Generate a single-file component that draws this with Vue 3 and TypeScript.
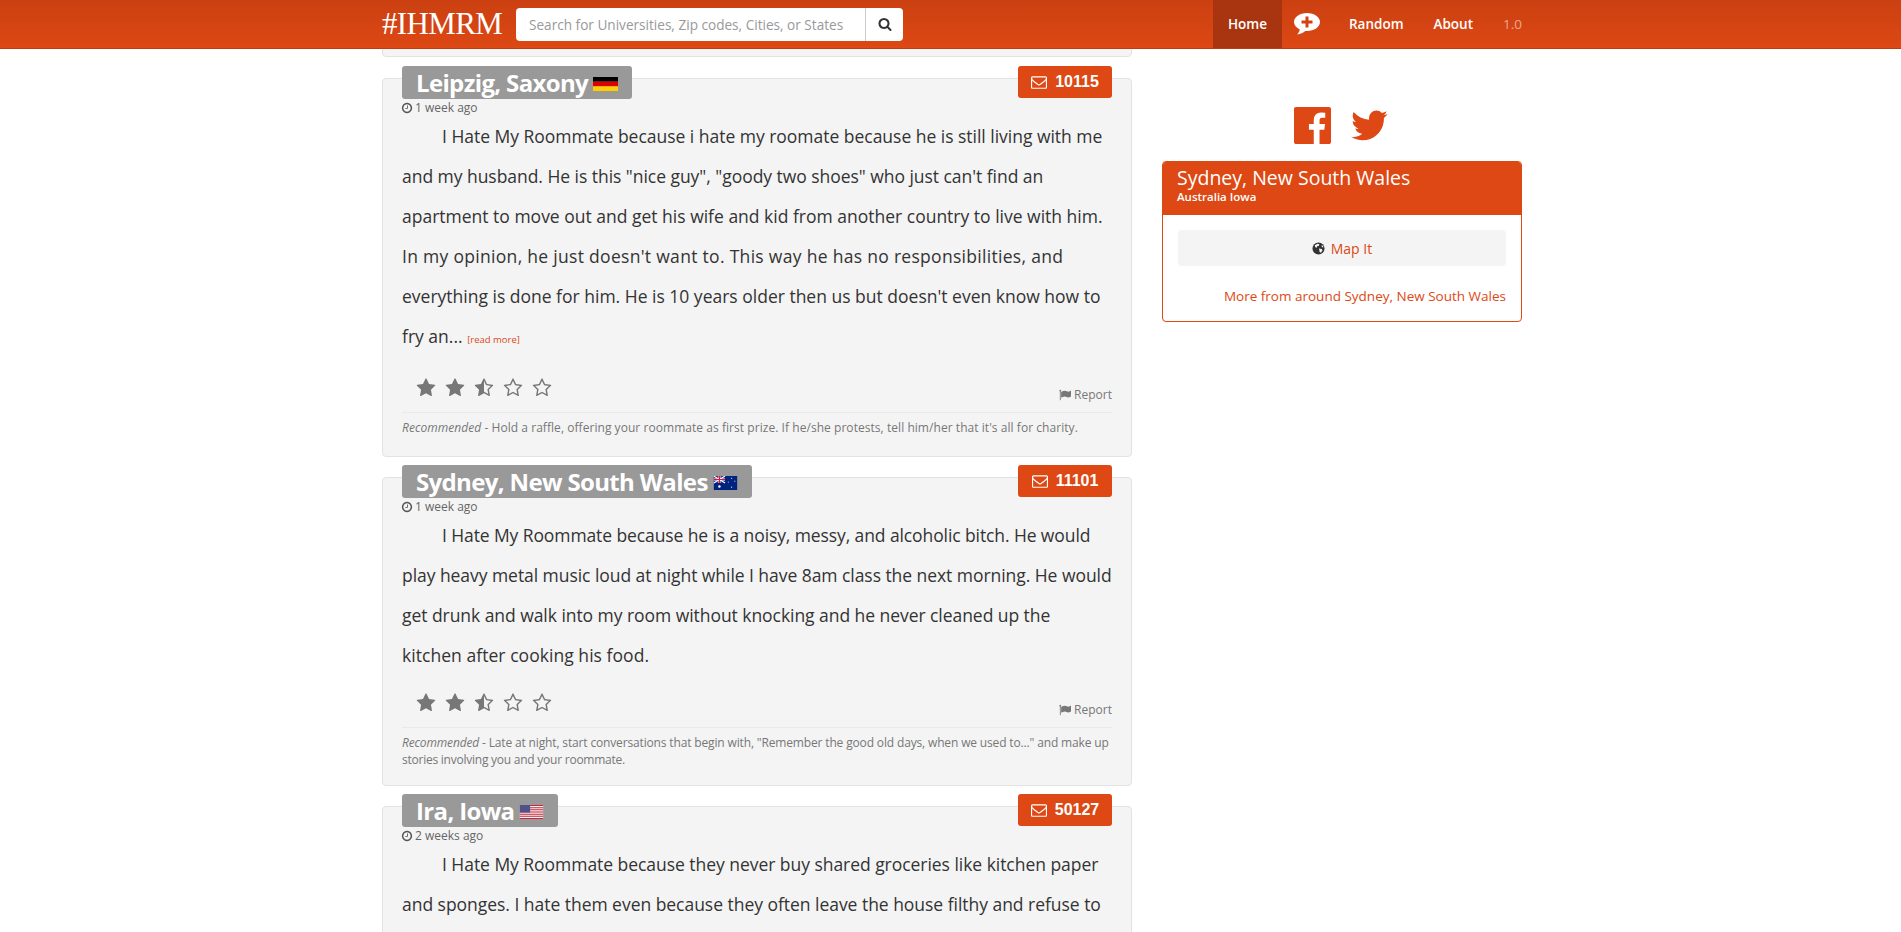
<script setup lang="ts">
interface Line {
  t: string
  ls?: number
}
interface Review {
  place: string
  flag: 'de' | 'au' | 'us'
  zip: string
  time: string
  lines: Line[]
  more?: boolean
  rec?: Line[]
}
const reviews: Review[] = [
  {
    place: 'Leipzig, Saxony',
    flag: 'de',
    zip: '10115',
    time: '1 week ago',
    more: true,
    lines: [
      { t: 'I Hate My Roommate because i hate my roomate because he is still living with me', ls: -0.02 },
      { t: 'and my husband. He is this "nice guy", "goody two shoes" who just can\'t find an', ls: -0.04 },
      { t: 'apartment to move out and get his wife and kid from another country to live with him.' },
      { t: 'In my opinion, he just doesn\'t want to. This way he has no responsibilities, and', ls: 0.3 },
      { t: 'everything is done for him. He is 10 years older then us but doesn\'t even know how to' },
      { t: 'fry an...' }
    ],
    rec: [{ t: 'Hold a raffle, offering your roommate as first prize. If he/she protests, tell him/her that it\'s all for charity.', ls: 0.05 }]
  },
  {
    place: 'Sydney, New South Wales',
    flag: 'au',
    zip: '11101',
    time: '1 week ago',
    lines: [
      { t: 'I Hate My Roommate because he is a noisy, messy, and alcoholic bitch. He would', ls: -0.1 },
      { t: 'play heavy metal music loud at night while I have 8am class the next morning. He would', ls: -0.05 },
      { t: 'get drunk and walk into my room without knocking and he never cleaned up the', ls: -0.05 },
      { t: 'kitchen after cooking his food.', ls: 0.05 }
    ],
    rec: [
      { t: 'Late at night, start conversations that begin with, "Remember the good old days, when we used to..." and make up', ls: -0.15 },
      { t: 'stories involving you and your roommate.', ls: -0.24 }
    ]
  },
  {
    place: 'Ira, Iowa',
    flag: 'us',
    zip: '50127',
    time: '2 weeks ago',
    lines: [
      { t: 'I Hate My Roommate because they never buy shared groceries like kitchen paper', ls: -0.04 },
      { t: 'and sponges. I hate them even because they often leave the house filthy and refuse to', ls: -0.03 }
    ]
  }
]
const track = (l: Line) => (l.ls ? { letterSpacing: `${l.ls}px` } : undefined)
const star = 'M1728 647q0 22-26 48l-363 354 86 500q1 7 1 20 0 21-10.500 35.500t-30.500 14.500q-19 0-40-12l-449-236-449 236q-22 12-40 12-21 0-31.500-14.500t-10.500-35.500q0-6 2-20l86-500-364-354q-25-27-25-48 0-37 56-46l502-73 225-455q19-41 49-41t49 41l225 455 502 73q56 9 56 46z'
const starHalf = 'M1250 957l257-250-356-52-66-10-30-60-159-322v963l59 31 318 168-60-355-12-66zm452-262l-363 354 86 500q5 33-6 51.500t-34 18.500q-17 0-40-12l-449-236-449 236q-23 12-40 12-23 0-34-18.500t-6-51.500l86-500-364-354q-32-32-23-59.500t54-34.500l502-73 225-455q20-41 49-41 28 0 49 41l225 455 502 73q45 7 54 34.500t-24 59.500z'
const starO = 'M1201 1004l306-297-422-62-189-382-189 382-422 62 306 297-73 421 378-199 377 199zm527-357q0 22-26 48l-363 354 86 500q1 7 1 20 0 50-41 50-19 0-40-12l-449-236-449 236q-22 12-40 12-21 0-31.500-14.500t-10.500-35.500q0-6 2-20l86-500-364-354q-25-27-25-48 0-37 56-46l502-73 225-455q19-41 49-41t49 41l225 455 502 73q56 9 56 46z'
const stars = [star, star, starHalf, starO, starO]
const envelope = 'M1664 1504v-768q-32 36-69 66-268 206-426 338-51 43-83 67t-86.500 48.500-102.500 24.500h-2q-48 0-102.500-24.500t-86.500-48.500-83-67q-158-132-426-338-37-30-69-66v768q0 13 9.500 22.500t22.500 9.500h1472q13 0 22.500-9.500t9.500-22.500zm0-1051v-24.500l-.5-13-3-12.500-5.500-9-9-7.500-14-2.500h-1472q-13 0-22.500 9.500t-9.500 22.500q0 168 147 284 193 152 401 317 6 5 35 29.500t46 37.500 44.500 31.500 50.500 27.500 43 9h2q20 0 43-9t50.500-27.500 44.500-31.500 46-37.500 35-29.500q208-165 401-317 54-43 100.500-115.500t46.500-131.500zm128-37v1088q0 66-47 113t-113 47h-1472q-66 0-113-47t-47-113v-1088q0-66 47-113t113-47h1472q66 0 113 47t47 113z'
const clock = 'M1024 544v448q0 14-9 23t-23 9h-320q-14 0-23-9t-9-23v-64q0-14 9-23t23-9h224v-352q0-14 9-23t23-9h64q14 0 23 9t9 23zm416 352q0-148-73-273t-198-198-273-73-273 73-198 198-73 273 73 273 198 198 273 73 273-73 198-198 73-273zm224 0q0 209-103 385.500t-279.500 279.500-385.500 103-385.500-103-279.500-279.500-103-385.500 103-385.500 279.500-279.500 385.500-103 385.500 103 279.500 279.500 103 385.500z'
const flagIcon = 'M320 256q0 72-64 110v1266q0 13-9.500 22.500t-22.500 9.500h-64q-13 0-22.500-9.500t-9.500-22.500v-1266q-64-38-64-110 0-53 37.500-90.500t90.500-37.500 90.500 37.500 37.500 90.500zm1472 64v763q0 25-12.500 38.500t-39.500 27.500q-215 116-369 116-61 0-123.500-22t-108.500-48-115.500-48-142.500-22q-192 0-464 146-17 9-33 9-26 0-45-19t-19-45v-742q0-32 31-55 21-14 79-43 236-120 421-120 107 0 200 29t219 88q38 19 88 19 54 0 117.500-21t110-47 88-47 54.500-21q26 0 45 19t19 45z'
const search = 'M1216 832q0-185-131.500-316.500t-316.500-131.500-316.500 131.500-131.500 316.500 131.500 316.500 316.500 131.500 316.500-131.500 131.500-316.500zm512 832q0 52-38 90t-90 38q-54 0-90-38l-343-342q-179 124-399 124-143 0-273.500-55.500t-225-150-150-225-55.500-273.500 55.500-273.500 150-225 225-150 273.500-55.500 273.500 55.500 225 150 150 225 55.500 273.500q0 220-124 399l343 343q37 37 37 90z'
const fb = 'M1579 128q35 0 60 25t25 60v1366q0 35-25 60t-60 25h-391v-595h199l30-232h-229v-148q0-56 23.500-84t91.500-28l122-1v-207q-63-9-178-9-136 0-217.500 80t-81.500 226v171h-200v232h200v595h-735q-35 0-60-25t-25-60v-1366q0-35 25-60t60-25h1366z'
const tw = 'M1684 408q-67 98-162 167 1 14 1 42 0 130-38 259.500t-115.500 248.500-184.500 210.500-258 146-323 54.500q-271 0-496-145 35 4 78 4 225 0 401-138-105-2-188-64.500t-114-159.500q33 5 61 5 43 0 85-11-112-23-185.500-111.500t-73.500-205.500v-4q68 38 146 41-66-44-105-115t-39-154q0-88 44-163 121 149 294.500 238.500t371.500 99.500q-8-38-8-74 0-134 94.500-228.500t228.500-94.500q140 0 236 102 109-21 205-78-37 115-142 178 92-10 184-50z'
</script>

<template>
  <div class="page">
    <header class="navbar">
      <div class="nav-inner">
        <a class="brand">#IHMRM</a>
        <form class="search" @submit.prevent>
          <input class="search-input" placeholder="Search for Universities, Zip codes, Cities, or States" />
          <button class="search-btn" type="button" aria-label="Search">
            <svg class="ic-search" viewBox="0 0 1792 1792"><path :d="search" /></svg>
          </button>
        </form>
        <nav class="nav-links">
          <a class="nav-link active">Home</a>
          <a class="nav-link nav-add" aria-label="Add">
            <svg class="ic-bubble" viewBox="0 0 28 24">
              <path d="M14 1C6.800 1 1 5 1 10c0 3.200 2.300 5.900 5.800 7.500-.4 2-1.500 3.700-2.600 5 3.200-.4 6.100-1.800 8.100-3.600.6.100 1.100.1 1.700.1 7.200 0 13-4 13-9S21.200 1 14 1z" fill="#fff" />
              <path d="M12.500 4.500h3v4h4v3h-4v4h-3v-4h-4v-3h4z" fill="#d34312" />
            </svg>
          </a>
          <a class="nav-link">Random</a>
          <a class="nav-link">About</a>
          <span class="nav-link version">1.0</span>
        </nav>
      </div>
    </header>

    <main class="container">
      <section class="feed">
        <div class="stub"></div>
        <article v-for="r in reviews" :key="r.zip" class="card">
          <div class="card-head">
            <h2 class="place">
              {{ r.place }}
              <svg v-if="r.flag === 'de'" class="flag" viewBox="0 0 25 15" preserveAspectRatio="none">
                <rect width="25" height="5" fill="#000" />
                <rect y="5" width="25" height="5" fill="#d00" />
                <rect y="10" width="25" height="5" fill="#ffce00" />
              </svg>
              <svg v-else-if="r.flag === 'au'" class="flag" viewBox="0 0 25 15">
                <rect width="25" height="15" fill="#00247d" />
                <rect width="12" height="7.500" fill="#2b2f8c" />
                <path d="M0 0l12 7.500M12 0L0 7.500" stroke="#fff" stroke-width="1.200" />
                <path d="M6 0v7.500M0 3.750h12" stroke="#fff" stroke-width="2.200" />
                <path d="M6 0v7.500M0 3.750h12" stroke="#e8112d" stroke-width="1.200" />
                <circle cx="6" cy="11.200" r="1.300" fill="#fff" />
                <circle cx="19" cy="2.500" r=".7" fill="#ccd" />
                <circle cx="19" cy="12" r=".7" fill="#ccd" />
                <circle cx="15.500" cy="6.500" r=".6" fill="#ccd" />
                <circle cx="22.500" cy="5.500" r=".6" fill="#ccd" />
              </svg>
              <svg v-else class="flag" viewBox="0 0 25 15">
                <rect width="25" height="15" fill="#f4f0f0" />
                <path d="M0 .6h25M0 2.900h25M0 5.200h25M0 7.500h25M0 9.800h25M0 12.100h25M0 14.400h25" stroke="#c6283c" stroke-width="1.100" />
                <rect width="11" height="8.100" fill="#50508a" />
              </svg>
            </h2>
            <span class="zip">
              <svg class="ic-env" viewBox="0 0 1792 1792"><path :d="envelope" /></svg>
              {{ r.zip }}
            </span>
          </div>
          <div class="time">
            <svg class="ic-clock" viewBox="0 0 1792 1792"><path :d="clock" /></svg>
            {{ r.time }}
          </div>
          <p class="body">
            <span v-for="(line, i) in r.lines" :key="i" class="line" :class="{ first: i === 0 }" :style="track(line)">
              {{ line.t }}
              <a v-if="r.more && i === r.lines.length - 1" class="more">[read more]</a>
            </span>
          </p>
          <template v-if="r.rec">
            <div class="meta">
              <div class="stars">
                <svg v-for="(s, i) in stars" :key="i" class="star" viewBox="0 0 1792 1792"><path :d="s" /></svg>
              </div>
              <a class="report">
                <svg class="ic-flag" viewBox="0 0 1792 1792"><path :d="flagIcon" /></svg>
                Report
              </a>
            </div>
            <div class="rec">
              <span v-for="(l, i) in r.rec" :key="i" class="line" :style="track(l)">
                <template v-if="i === 0"><em>Recommended</em> - </template>{{ l.t }}
              </span>
            </div>
          </template>
        </article>
      </section>

      <aside class="side">
        <div class="social">
          <svg class="ic-soc" viewBox="128 128 1536 1536"><path :d="fb" /></svg>
          <svg class="ic-soc tw" viewBox="100 200 1600 1400"><path :d="tw" /></svg>
        </div>
        <div class="panel">
          <div class="panel-head">
            <div class="panel-title">Sydney, New South Wales</div>
            <div class="panel-sub">Australia Iowa</div>
          </div>
          <div class="panel-body">
            <a class="map">
              <svg class="ic-globe" viewBox="0 0 14 14">
                <circle cx="7" cy="7" r="6.500" fill="#333" />
                <path d="M3 3.500l3-1.700 2 .7-.8 1.800-1.700.4-.3 1.600-1.600-.6zM7.500 7l3 .5.8 1.500-1.600 2.500-1.500-.7-.3-2zM10.500 3l1.500 1.500.2 1.500-1.700-.6z" fill="#f4f4f4" />
              </svg>
              Map It
            </a>
            <a class="around">More from around Sydney, New South Wales</a>
          </div>
        </div>
      </aside>
    </main>
  </div>
</template>

<style>
html, body { margin: 0; height: 100%; overflow: hidden; background: #fff; }
</style>

<style scoped>
.page {
  height: 932px;
  overflow: hidden;
  font-family: "Open Sans", "Noto Sans", sans-serif;
  color: #333;
}
.navbar {
  position: fixed;
  top: 0; left: 0; right: 0;
  z-index: 10;
  height: 48px;
  border-bottom: 1px solid #bf3e11;
  background: linear-gradient(#cb4011, #dd4814);
}
.nav-inner {
  width: 1140px;
  margin-left: 382px;
  height: 48px;
  display: flex;
  align-items: center;
}
.brand {
  font-family: "Liberation Serif", serif;
  font-size: 31px;
  color: #fff;
  letter-spacing: -.65px;
  width: 134px;
}
.search { display: flex; width: 387px; height: 33px; }
.search-input {
  flex: 1;
  min-width: 0;
  border: 0;
  border-radius: 4px 0 0 4px;
  padding: 0 13px;
  font: 13.600px "Open Sans", sans-serif;
  background: #fff;
  outline: 0;
}
.search-input::placeholder { color: #999; opacity: 1; }
.search-btn {
  width: 38px;
  border: 0;
  border-left: 1px solid #ccc;
  border-radius: 0 4px 4px 0;
  background: #fff;
  padding: 0;
  display: flex;
  align-items: center;
  justify-content: center;
}
.ic-search { width: 14px; height: 14px; fill: #333; }
.nav-links { margin-left: auto; display: flex; height: 48px; align-items: stretch; }
.nav-link {
  padding: 0 15px;
  display: flex;
  align-items: center;
  color: #fff;
  font-size: 13.500px;
  font-weight: 600;
}
.nav-link.active { background: #a93510; padding: 0 15px; width: 69px; box-sizing: border-box; }
.nav-add { padding: 0 13px 0 11px; }
.ic-bubble { width: 28px; height: 24px; }
.version { color: rgba(255,255,255,.55); padding: 0 0 0 15px; font-weight: 400; }
.container {
  width: 1140px;
  margin-left: 382px;
  display: flex;
  gap: 30px;
  align-items: flex-start;
}
.feed { width: 750px; flex: none; }
.stub {
  height: 57px;
  margin-bottom: 21px;
  background: #f4f4f4;
  border: 1px solid #e3e3e3;
  border-radius: 4px;
  box-sizing: border-box;
}
.card {
  margin-top: 20px;
  padding: 0 19px 17px 19px;
  background: #f4f4f4;
  border: 1px solid #e3e3e3;
  border-radius: 4px;
}
.stub + .card { margin-top: 0; }
.card-head {
  display: flex;
  justify-content: space-between;
  align-items: flex-start;
  margin-top: -13px;
}
.place {
  margin: 0;
  background: #999;
  color: #fff;
  border-radius: 3px;
  font-size: 24px;
  font-weight: 700;
  line-height: 33px;
  padding: 0 14px;
  display: flex;
  align-items: center;
  gap: 5px;
  letter-spacing: -.65px;
}
.flag { width: 25px; height: 14px; margin-top: 3px; }
.zip {
  background: #dd4814;
  color: #fff;
  border-radius: 3px;
  font: 700 16px "Liberation Sans", Arial, sans-serif;
  height: 32px;
  width: 94px;
  display: flex;
  align-items: center;
  justify-content: center;
  gap: 8px;
}
.ic-env { width: 16px; height: 16px; fill: #fff; }
.time {
  font-size: 12px;
  color: #666;
  line-height: 16px;
  margin-top: 1px;
  display: flex;
  align-items: center;
  gap: 2px;
}
.ic-clock { width: 12px; height: 12px; fill: #555; margin-left: -1px; }
.body {
  margin: 0;
  font-size: 17.500px;
  line-height: 40px;
  color: #333;
}
.line { display: block; white-space: nowrap; }
.line.first { text-indent: 40px; }
.more { font-size: 9.500px; color: #dd4814; letter-spacing: 0; }
.meta {
  display: flex;
  justify-content: space-between;
  align-items: flex-end;
  margin-top: 18px;
  padding: 0 0 8px 14px;
  border-bottom: 1px solid #eaeaea;
}
.stars { display: flex; gap: 9px; margin-bottom: 6px; }
.star { width: 20px; height: 20px; fill: #777; display: block; }
.report { font-size: 12px; color: #777; display: flex; align-items: center; gap: 3px; line-height: 16px; margin-bottom: 1px; }
.ic-flag { width: 12px; height: 12px; fill: #777; }
.rec { margin-top: 6px; min-height: 20px; font-size: 12px; line-height: 17px; color: #777; }
.rec em { font-style: italic; }
.side { width: 360px; flex: none; padding-top: 107px; }
.social { display: flex; justify-content: center; gap: 20px; align-items: center; margin-bottom: 17px; padding-right: 2px; }
.ic-soc { width: 37px; height: 37px; fill: #dd4814; }
.panel {
  border: 1px solid #dd4814;
  border-radius: 4px;
  overflow: hidden;
  background: #fff;
}
.panel-head { background: #dd4814; color: #fff; height: 53px; padding: 4px 14px 0; box-sizing: border-box; }
.panel-title { font-size: 19.500px; line-height: 24px; font-weight: 500; }
.panel-sub { font-size: 11.500px; font-weight: 600; line-height: 14px; }
.panel-body { padding: 15px; }
.map {
  height: 36px;
  border-radius: 4px;
  background: #f4f4f4;
  color: #dd4814;
  font-size: 14px;
  display: flex;
  align-items: center;
  justify-content: center;
  gap: 6px;
}
.ic-globe { width: 13px; height: 13px; }
.around {
  display: block;
  margin-top: 20px;
  text-align: right;
  font-size: 13.500px;
  line-height: 20px;
  color: #dd4814;
}
</style>
